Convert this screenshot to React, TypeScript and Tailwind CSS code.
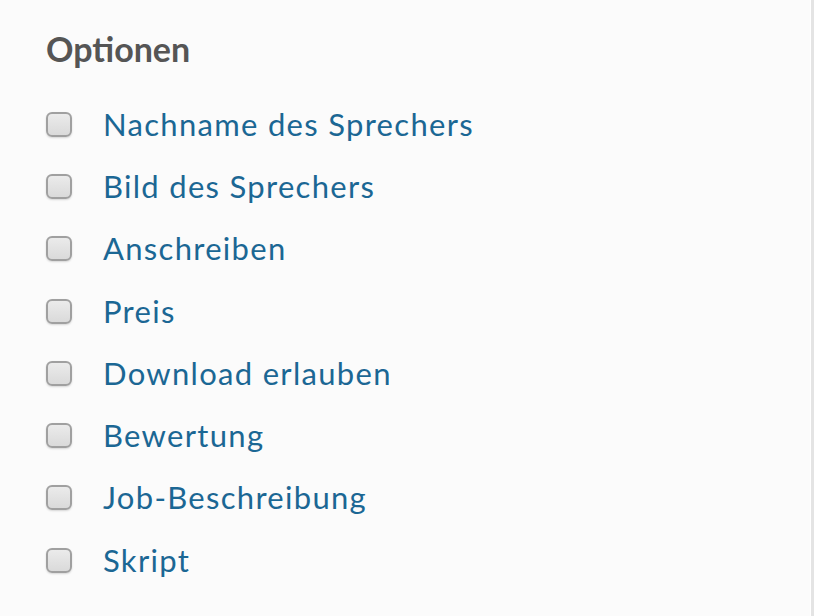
import React from 'react';

const options = [
  'Nachname des Sprechers',
  'Bild des Sprechers',
  'Anschreiben',
  'Preis',
  'Download erlauben',
  'Bewertung',
  'Job-Beschreibung',
  'Skript',
];

export default function App() {
  return (
    <div className="flex h-[616px] w-[814px] bg-[#e4e4e4]" style={{ fontFamily: 'Lato, "Open Sans", sans-serif' }}>
      <div className="h-full w-[811px] border-r border-r-white bg-[#fbfbfb] pl-[46px] pt-[30px]">
        <h2 className="text-[34px] font-bold leading-[38px] text-[#555555]">Optionen</h2>
        <ul className="mt-[25px] flex flex-col">
          {options.map((label) => (
            <li key={label} className="flex h-[62.3px] items-center">
              <span className="h-[25px] w-[26px] shrink-0 rounded-[6px] border-2 border-[#a0a0a0] bg-gradient-to-b from-[#ebebeb] to-[#dadada] shadow-[0_1px_2px_rgba(0,0,0,0.15)]" />
              <span className="ml-[31px] text-[31px] leading-none tracking-[1.3px] text-[#1b6794]">{label}</span>
            </li>
          ))}
        </ul>
      </div>
    </div>
  );
}
